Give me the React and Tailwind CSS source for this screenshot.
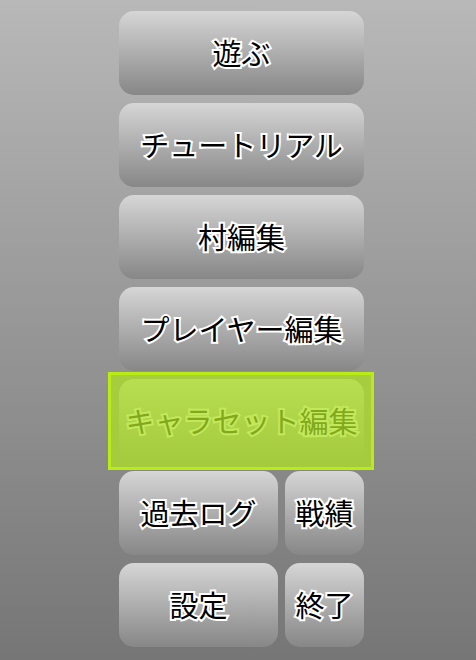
import React from 'react';

const outline = '[-webkit-text-stroke:4px_#ffffff] [paint-order:stroke_fill]';

const MenuButton = ({ label, className = '' }) => (
  <button
    className={`h-[84px] rounded-[15px] bg-gradient-to-b from-[#d6d6d6] to-[#878787] flex items-center justify-center text-[29px] font-normal text-black ${outline} ${className}`}
  >
    {label}
  </button>
);

const App = () => {
  return (
    <div
      className="w-[476px] h-[660px] overflow-hidden bg-gradient-to-b from-[#b8b8b8] to-[#767676] pt-[11px] pl-[119px]"
      style={{ fontFamily: '"Noto Sans CJK JP", "Noto Sans", sans-serif' }}
    >
      <div className="w-[245px] flex flex-col gap-[8px]">
        <MenuButton label="遊ぶ" />
        <MenuButton label="チュートリアル" />
        <MenuButton label="村編集" />
        <MenuButton label="プレイヤー編集" />

        {/* Focused item with green highlight */}
        <div className="relative">
          <MenuButton label="キャラセット編集" className="w-full" />
          <div className="absolute -top-[7px] -bottom-[7px] -left-[11px] -right-[10px] border-[3px] border-[#b8ec14] bg-[#aee024]/75 pointer-events-none"></div>
        </div>

        <div className="flex gap-[7px]">
          <MenuButton label="過去ログ" className="w-[159px]" />
          <MenuButton label="戦績" className="flex-1" />
        </div>
        <div className="flex gap-[7px]">
          <MenuButton label="設定" className="w-[159px]" />
          <MenuButton label="終了" className="flex-1" />
        </div>
      </div>
    </div>
  );
};

export default App;
